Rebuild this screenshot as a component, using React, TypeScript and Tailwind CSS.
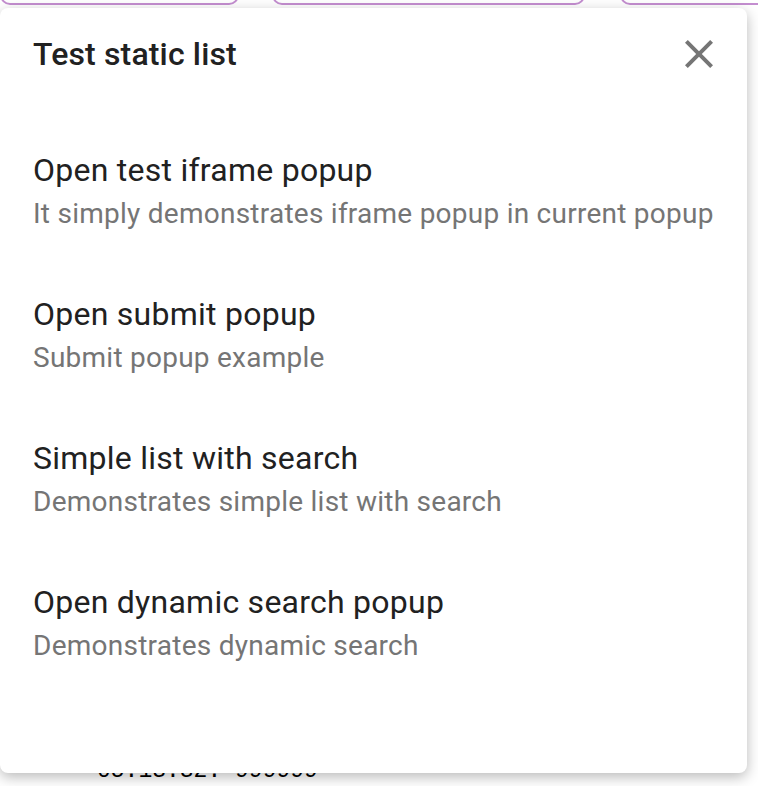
const ITEMS = [
  { title: 'Open test iframe popup', sub: 'It simply demonstrates iframe popup in current popup' },
  { title: 'Open submit popup', sub: 'Submit popup example' },
  { title: 'Simple list with search', sub: 'Demonstrates simple list with search' },
  { title: 'Open dynamic search popup', sub: 'Demonstrates dynamic search' },
];

function CloseIcon() {
  return (
    <svg width="48" height="48" viewBox="0 0 24 24" fill="#757575" aria-hidden>
      <path d="M19 6.41L17.59 5 12 10.59 6.41 5 5 6.41 10.59 12 5 17.59 6.41 19 12 13.41 17.59 19 19 17.59 13.41 12z" />
    </svg>
  );
}

export default function App() {
  return (
    <div className="relative h-[786px] w-[758px] overflow-hidden bg-white font-['Roboto',sans-serif]">
      {/* page behind the popup */}
      <div className="flex h-full flex-col justify-between">
        <div className="-mt-[30px] flex">
          <div className="h-[35px] w-[239px] shrink-0 rounded-[10px] border-2 border-[#c48ed0]" />
          <div className="ml-[33px] h-[35px] w-[313px] shrink-0 rounded-[10px] border-2 border-[#c48ed0]" />
          <div className="ml-[35px] h-[35px] w-[200px] shrink-0 rounded-[10px] border-2 border-[#c48ed0]" />
        </div>
        <div className="mb-[1px] pl-[97px] font-['Liberation_Mono',monospace] text-[23px] leading-[28px] text-black">
          05:13:32: 999999
        </div>
      </div>

      {/* popup */}
      <div className="absolute left-0 top-[8px] flex h-[765px] w-[747px] flex-col rounded-[8px] bg-white shadow-[0_4px_14px_rgba(0,0,0,0.28)]">
        <div className="mt-[26px] flex h-[40px] items-center justify-between pl-[33px] pr-[24px]">
          <h1 className="text-[32px] font-medium tracking-[0.15px] text-[#212121]">Test static list</h1>
          <button type="button" aria-label="Close" className="flex h-[48px] w-[48px] items-center justify-center">
            <CloseIcon />
          </button>
        </div>
        <ul className="mt-[46px] flex flex-col">
          {ITEMS.map((it) => (
            <li key={it.title} className="flex flex-col py-[28px] pl-[33px]">
              <span className="flex h-[44px] items-center text-[32px] tracking-[0.25px] text-[#212121]">{it.title}</span>
              <span className="flex h-[44px] items-center text-[28px] tracking-[0.25px] text-[#757575]">{it.sub}</span>
            </li>
          ))}
        </ul>
      </div>
    </div>
  );
}
